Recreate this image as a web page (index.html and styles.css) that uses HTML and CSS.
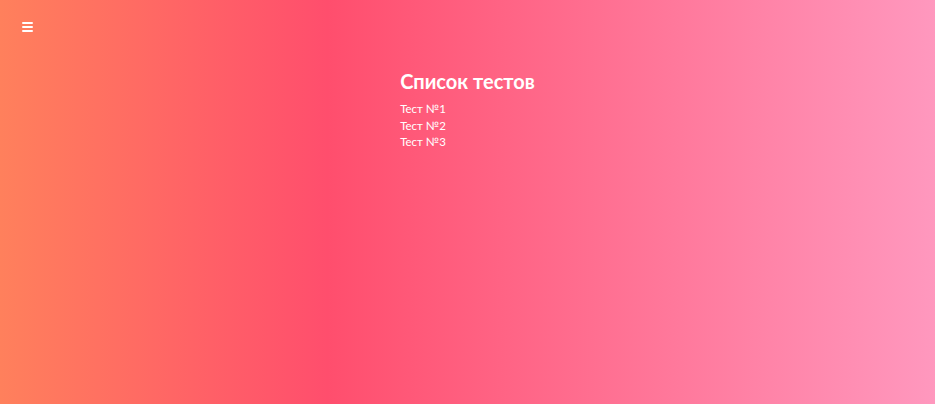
FILE: index.html
```html
<!DOCTYPE html>
<html lang="ru">
<head>
<meta charset="utf-8">
<title>Список тестов</title>
<link rel="stylesheet" href="styles.css">
</head>
<body>
<div class="page">
  <header class="topbar">
    <button class="menu-btn" aria-label="Меню">
      <span class="bar"></span><span class="bar"></span><span class="bar"></span>
    </button>
  </header>
  <main class="content">
    <div class="tests">
      <h1 class="title">Список тестов</h1>
      <ul class="test-list">
        <li>Тест №1</li>
        <li>Тест №2</li>
        <li>Тест №3</li>
      </ul>
    </div>
  </main>
</div>
</body>
</html>
```
FILE: styles.css
```css
html, body {
  margin: 0;
  padding: 0;
  height: 100%;
}
body {
  font-family: "Lato", "Noto Sans", sans-serif;
  color: #fff;
  background: linear-gradient(to right, #ff805c 0%, #ff4e6d 35%, #ff98be 100%);
}
.page {
  min-height: 100%;
}
.topbar {
  padding: 22px 0 0 22px;
  height: 20px;
}
.menu-btn {
  display: flex;
  flex-direction: column;
  gap: 2px;
  width: 11px;
  padding: 0;
  margin: 0;
  border: 0;
  background: none;
  cursor: pointer;
}
.bar {
  display: block;
  width: 11px;
  height: 2px;
  background: #fff;
  border-radius: 1px;
}
.content {
  display: flex;
  justify-content: center;
  padding-top: 24px;
}
.tests {
  width: fit-content;
}
.title {
  margin: 0 0 5px;
  font-size: 20px;
  font-weight: 700;
  line-height: 30px;
}
.test-list {
  list-style: none;
  margin: 0;
  padding: 0;
  font-size: 11.5px;
  line-height: 16.5px;
}
```
